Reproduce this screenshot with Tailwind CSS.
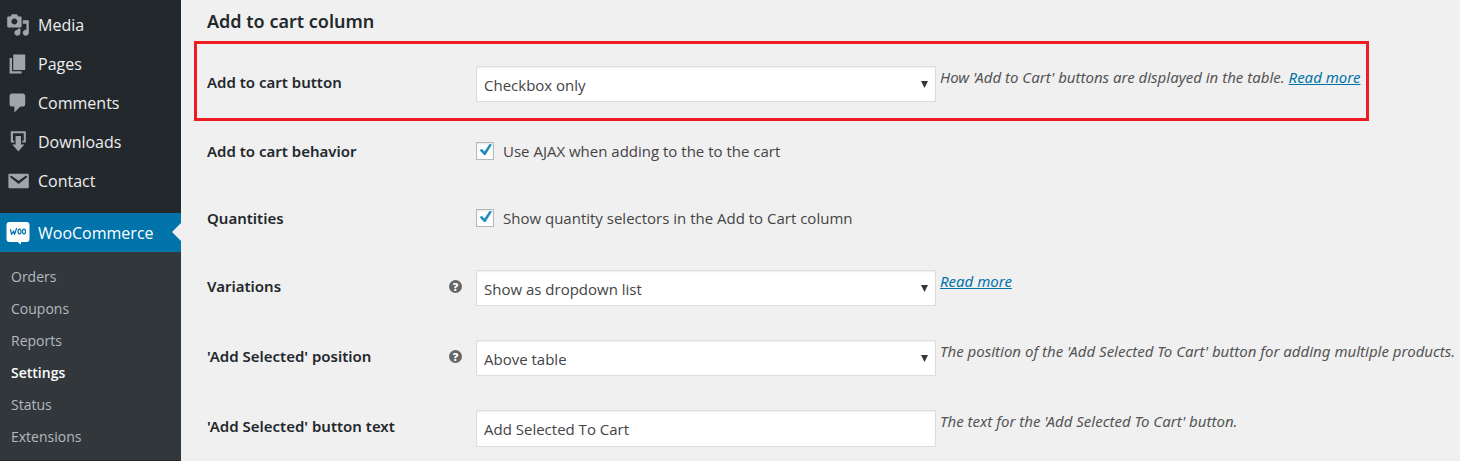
<!DOCTYPE html>
<html lang="en">
<head>
<meta charset="utf-8">
<title>WooCommerce Settings</title>
<script src="https://cdn.jsdelivr.net/npm/@tailwindcss/browser@4"></script>
</head>
<body class="flex min-h-screen bg-[#f0f0f0] font-['Open_Sans',sans-serif] text-[#444]">
<nav aria-label="Admin menu" class="flex w-[181px] shrink-0 flex-col bg-[#23282d] pt-[5px] text-base text-[#eee]">
  <ul>
    <li><a href="#media" class="flex h-[39px] items-center gap-2 pl-[6px]"><svg class="size-6 fill-[#a0a5aa]" viewBox="0 0 20 20" aria-hidden="true"><path d="M13 11V4c0-.55-.45-1-1-1h-1.670L9 1H5L3.670 3H2c-.55 0-1 .45-1 1v7c0 .55.45 1 1 1h10c.55 0 1-.45 1-1zM7 4.500c1.380 0 2.500 1.120 2.500 2.500S8.380 9.500 7 9.500 4.500 8.380 4.500 7 5.620 4.500 7 4.500zM14 6h5v10.500c0 1.380-1.120 2.500-2.500 2.500S14 17.880 14 16.500s1.120-2.500 2.500-2.500c.17 0 .34.02.5.05V9h-3V6zm-4 8.050V13h2v3.500c0 1.380-1.120 2.500-2.500 2.500S7 17.880 7 16.500 8.120 14 9.500 14c.17 0 .34.02.5.05z"/></svg>Media</a></li>
    <li><a href="#pages" class="flex h-[39px] items-center gap-2 pl-[6px]"><svg class="size-6 fill-[#a0a5aa]" viewBox="0 0 20 20" aria-hidden="true"><path d="M6 15V2h10v13H6zm-1 1h8v2H3V5h2v11z"/></svg>Pages</a></li>
    <li><a href="#comments" class="flex h-[39px] items-center gap-2 pl-[6px]"><svg class="size-6 fill-[#a0a5aa]" viewBox="0 0 20 20" aria-hidden="true"><path d="M5 2h9c1.100 0 2 .9 2 2v7c0 1.100-.9 2-2 2h-2l-5 5v-5H5c-1.100 0-2-.9-2-2V4c0-1.100.9-2 2-2z"/></svg>Comments</a></li>
    <li><a href="#downloads" class="flex h-[39px] items-center gap-2 pl-[6px]"><svg class="size-6 fill-[#a0a5aa]" viewBox="0 0 20 20" aria-hidden="true"><path d="M4 1h12.500v9.500h-3V9h1.300V2.800H5.800V9H7v1.500H4zM8 5h4.500v7h2.800l-5 6L5.200 12H8z"/></svg>Downloads</a></li>
    <li><a href="#contact" class="flex h-[39px] items-center gap-2 pl-[6px]"><svg class="size-6 fill-[#a0a5aa]" viewBox="0 0 20 20" aria-hidden="true"><path d="M3 4h15q1 0 1 1v10q0 1-1 1H3q-1 0-1-1V5q0-1 1-1zm7.500 8.600l6.740-5.530c.24-.2.43-.66.13-1.070-.29-.41-.82-.42-1.170-.17l-5.700 3.860L4.800 5.830c-.35-.25-.88-.24-1.170.17-.3.41-.11.87.13 1.070z"/></svg>Contact</a></li>
  </ul>
  <a href="#woocommerce" aria-current="true" class="relative mt-[13px] flex h-[39px] items-center gap-2 bg-[#0073aa] pl-[6px] text-white"><svg class="size-6" viewBox="0 0 24 24" aria-hidden="true"><path fill="#fff" d="M3.500 1h17q3 0 3 3v14q0 3-3 3H15v2.500L11.500 21h-8q-3 0-3-3V4q0-3 3-3z"/><path fill="none" stroke="#0073aa" stroke-width="1.200" stroke-linecap="round" stroke-linejoin="round" d="M4.500 8.500l1 5 2-3.500 1 3.500 2-6"/><ellipse cx="13.500" cy="10.500" rx="1.500" ry="2.300" fill="none" stroke="#0073aa" stroke-width="1.200"/><ellipse cx="18" cy="10.500" rx="1.500" ry="2.300" fill="none" stroke="#0073aa" stroke-width="1.200"/></svg>WooCommerce<svg class="absolute top-[10px] right-0 h-[18px] w-[9px] fill-[#f0f0f0]" viewBox="0 0 9 18" aria-hidden="true"><path d="M9 0v18L0 9z"/></svg></a>
  <ul class="bg-[#32373c] pt-[9px] pb-[7px] pl-[11px] text-sm leading-8 text-[#b4b9be]">
    <li><a href="#orders">Orders</a></li>
    <li><a href="#coupons">Coupons</a></li>
    <li><a href="#reports">Reports</a></li>
    <li><a href="#settings" aria-current="page" class="font-semibold text-white">Settings</a></li>
    <li><a href="#status">Status</a></li>
    <li><a href="#extensions">Extensions</a></li>
  </ul>
</nav>
<main class="min-w-0 flex-1">
  <form class="flex flex-col pl-[13px] text-[15px]">
    <h2 class="flex h-[41px] items-center pl-[13px] font-['Noto_Sans',sans-serif] text-lg font-semibold text-[#23282d]">Add to cart column</h2>

    <div class="mr-[91px] grid h-20 grid-cols-[269px_460px_1fr] items-start border-3 border-[#ed1c24] pt-[22px] pl-[10px]">
      <label for="cart-button" class="flex h-8 items-center font-['Noto_Sans',sans-serif] font-semibold text-[#23282d]">Add to cart button</label>
      <div class="relative"><select id="cart-button" class="h-9 w-full appearance-none border border-[#ddd] bg-white px-[7px] pt-[2px] shadow-[inset_0_1px_2px_rgba(0,0,0,0.07)]"><option>Checkbox only</option></select><svg class="pointer-events-none absolute top-[15px] right-2 size-[7px] fill-[#32373c]" viewBox="0 0 7 7" aria-hidden="true"><path d="M0 0h7L3.500 7z"/></svg></div>
      <p class="pl-1 font-['Noto_Sans',sans-serif] leading-[22px] whitespace-nowrap text-[#555] italic">How 'Add to Cart' buttons are displayed in the table. <a href="#more" class="text-[#0073aa] underline">Read more</a></p>
    </div>

    <div class="mt-3 grid h-9 grid-cols-[269px_1fr] items-center pl-[13px]">
      <span id="behavior" class="font-['Noto_Sans',sans-serif] font-semibold text-[#23282d]">Add to cart behavior</span>
      <div class="flex items-center gap-[9px]"><span class="relative size-[18px]"><input id="ajax" type="checkbox" checked aria-describedby="behavior" class="block size-[18px] appearance-none border border-[#b4b9be] bg-white shadow-[inset_0_1px_2px_rgba(0,0,0,0.1)]"><svg class="pointer-events-none absolute inset-0 size-[18px] fill-[#1e8cbe]" viewBox="0 0 18 18" aria-hidden="true"><path d="M3.500 8l2.500-1 2.500 2.500L13.500 2l2.500.5L9.500 13H8z"/></svg></span><label for="ajax">Use AJAX when adding to the to the cart</label></div>
    </div>

    <div class="mt-[31px] grid h-9 grid-cols-[269px_1fr] items-center pl-[13px]">
      <span id="quantities" class="font-['Noto_Sans',sans-serif] font-semibold text-[#23282d]">Quantities</span>
      <div class="flex items-center gap-[9px]"><span class="relative size-[18px]"><input id="quantity" type="checkbox" checked aria-describedby="quantities" class="block size-[18px] appearance-none border border-[#b4b9be] bg-white shadow-[inset_0_1px_2px_rgba(0,0,0,0.1)]"><svg class="pointer-events-none absolute inset-0 size-[18px] fill-[#1e8cbe]" viewBox="0 0 18 18" aria-hidden="true"><path d="M3.500 8l2.500-1 2.500 2.500L13.500 2l2.500.5L9.500 13H8z"/></svg></span><label for="quantity">Show quantity selectors in the Add to Cart column</label></div>
    </div>

    <div class="mt-[34px] grid h-9 grid-cols-[269px_460px_1fr] items-start pl-[13px]">
      <div class="flex h-8 items-center justify-between pr-[14px]"><label for="variations" class="font-['Noto_Sans',sans-serif] font-semibold text-[#23282d]">Variations</label><button type="button" aria-label="Help" class="flex size-[13px] items-center justify-center rounded-full bg-[#666] text-[11px] leading-none font-extrabold text-white">?</button></div>
      <div class="relative"><select id="variations" class="h-9 w-full appearance-none border border-[#ddd] bg-white px-[7px] pt-[2px] shadow-[inset_0_1px_2px_rgba(0,0,0,0.07)]"><option>Show as dropdown list</option></select><svg class="pointer-events-none absolute top-[15px] right-2 size-[7px] fill-[#32373c]" viewBox="0 0 7 7" aria-hidden="true"><path d="M0 0h7L3.500 7z"/></svg></div>
      <p class="pl-1 font-['Noto_Sans',sans-serif] leading-[22px] whitespace-nowrap text-[#555] italic"><a href="#variations-help" class="text-[#0073aa] underline">Read more</a></p>
    </div>

    <div class="mt-[34px] grid h-9 grid-cols-[269px_460px_1fr] items-start pl-[13px]">
      <div class="flex h-8 items-center justify-between pr-[14px]"><label for="position" class="font-['Noto_Sans',sans-serif] font-semibold text-[#23282d]">'Add Selected' position</label><button type="button" aria-label="Help" class="flex size-[13px] items-center justify-center rounded-full bg-[#666] text-[11px] leading-none font-extrabold text-white">?</button></div>
      <div class="relative"><select id="position" class="h-9 w-full appearance-none border border-[#ddd] bg-white px-[7px] pt-[2px] shadow-[inset_0_1px_2px_rgba(0,0,0,0.07)]"><option>Above table</option></select><svg class="pointer-events-none absolute top-[15px] right-2 size-[7px] fill-[#32373c]" viewBox="0 0 7 7" aria-hidden="true"><path d="M0 0h7L3.500 7z"/></svg></div>
      <p class="pl-1 font-['Noto_Sans',sans-serif] leading-[22px] whitespace-nowrap text-[#555] italic">The position of the 'Add Selected To Cart' button for adding multiple products.</p>
    </div>

    <div class="mt-[34px] grid grid-cols-[269px_460px_1fr] items-start pl-[13px]">
      <label for="button-text" class="flex h-8 items-center font-['Noto_Sans',sans-serif] font-semibold text-[#23282d]">'Add Selected' button text</label>
      <input id="button-text" type="text" value="Add Selected To Cart" class="h-[37px] w-full border border-[#ddd] bg-white px-[7px] shadow-[inset_0_1px_2px_rgba(0,0,0,0.07)]">
      <p class="pl-1 font-['Noto_Sans',sans-serif] leading-[22px] whitespace-nowrap text-[#555] italic">The text for the 'Add Selected To Cart' button.</p>
    </div>
  </form>
</main>
</body>
</html>
